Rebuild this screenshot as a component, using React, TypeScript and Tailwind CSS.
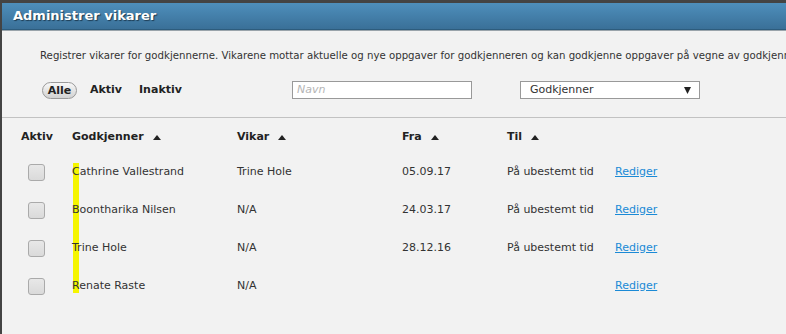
import React from "react";

interface Vikar {
  godkjenner: string;
  vikar: string;
  fra: string;
  til: string;
}

const rows: Vikar[] = [
  { godkjenner: "Cathrine Vallestrand", vikar: "Trine Hole", fra: "05.09.17", til: "På ubestemt tid" },
  { godkjenner: "Boontharika Nilsen", vikar: "N/A", fra: "24.03.17", til: "På ubestemt tid" },
  { godkjenner: "Trine Hole", vikar: "N/A", fra: "28.12.16", til: "På ubestemt tid" },
  { godkjenner: "Renate Raste", vikar: "N/A", fra: "", til: "" },
];

const cols = "grid grid-cols-[51px_165px_165px_105px_108px_1fr] items-center";

function SortArrow() {
  return (
    <svg width="8" height="5" viewBox="0 0 8 5" className="ml-[9px] inline-block">
      <path d="M0 5 L4 0 L8 5 Z" fill="#222" />
    </svg>
  );
}

function HeaderCell({ label, sort = true }: { label: string; sort?: boolean }) {
  return (
    <div className="flex items-center font-bold">
      {label}
      {sort && <SortArrow />}
    </div>
  );
}

export default function App() {
  return (
    <div className="w-[786px] h-[334px] overflow-hidden bg-[#444] pt-[3px] pl-[2px] text-[11px] text-[#333] font-['DejaVu_Sans',Verdana,sans-serif]">
      <div className="h-full bg-[#f2f2f2] flex flex-col">
        <div className="h-[27px] bg-gradient-to-b from-[#4e8fbc] to-[#3a7098] border-b border-[#2d5c7d] flex items-center pl-[11px]">
          <h1 className="text-white font-bold text-[13px] [text-shadow:1px_1px_1px_#1d3b52]">
            Administrer vikarer
          </h1>
        </div>
        <div className="h-px bg-[#9aa4ab]" />

        <p className="mt-[18px] pl-[38px] text-[10.2px] leading-[14px] whitespace-nowrap overflow-hidden">
          Registrer vikarer for godkjennerne. Vikarene mottar aktuelle og nye oppgaver for godkjenneren og kan godkjenne oppgaver på vegne av godkjenne
        </p>

        <div className="mt-[18px] h-[18px] flex items-center pl-[40px]">
          <button className="h-[17px] w-[35px] rounded-full border border-[#9a9a9a] bg-gradient-to-b from-[#f8f8f8] to-[#d2d2d2] font-bold text-[#222] leading-none">
            Alle
          </button>
          <span className="ml-[13px] font-bold text-[#222]">Aktiv</span>
          <span className="ml-[17px] font-bold text-[#222]">Inaktiv</span>
          <div className="ml-[110px] w-[180px] h-[18px] bg-white border border-[#999] flex items-center px-[4px]">
            <span className="italic text-[#b5b5b5]">Navn</span>
          </div>
          <div className="ml-[48px] w-[180px] h-[18px] bg-white border border-[#999] flex items-center justify-between pl-[9px] pr-[8px]">
            <span>Godkjenner</span>
            <svg width="7" height="7" viewBox="0 0 7 7">
              <path d="M0 0 L7 0 L3.5 7 Z" fill="#222" />
            </svg>
          </div>
        </div>

        <div className="mt-[18px] h-px bg-[#c2c2c2]" />

        <div className="relative pl-[19px]">
          <div className="absolute left-[71px] top-[45px] w-[6px] h-[130px] bg-[#f5f500]" />
          <div className={`${cols} h-[35px] pt-[3px] relative text-[#222]`}>
            <HeaderCell label="Aktiv" sort={false} />
            <HeaderCell label="Godkjenner" />
            <HeaderCell label="Vikar" />
            <HeaderCell label="Fra" />
            <HeaderCell label="Til" />
            <div />
          </div>
          {rows.map((r) => (
            <div key={r.godkjenner} className={`${cols} h-[38px] relative`}>
              <div className="pl-[7px]">
                <div className="w-[17px] h-[17px] rounded-[3px] border border-[#aaa] bg-gradient-to-b from-[#e8e8e8] to-[#dadada]" />
              </div>
              <div>{r.godkjenner}</div>
              <div>{r.vikar}</div>
              <div>{r.fra}</div>
              <div>{r.til}</div>
              <div>
                <a href="#" className="text-[#1b8ad6] underline">
                  Rediger
                </a>
              </div>
            </div>
          ))}
        </div>
      </div>
    </div>
  );
}
